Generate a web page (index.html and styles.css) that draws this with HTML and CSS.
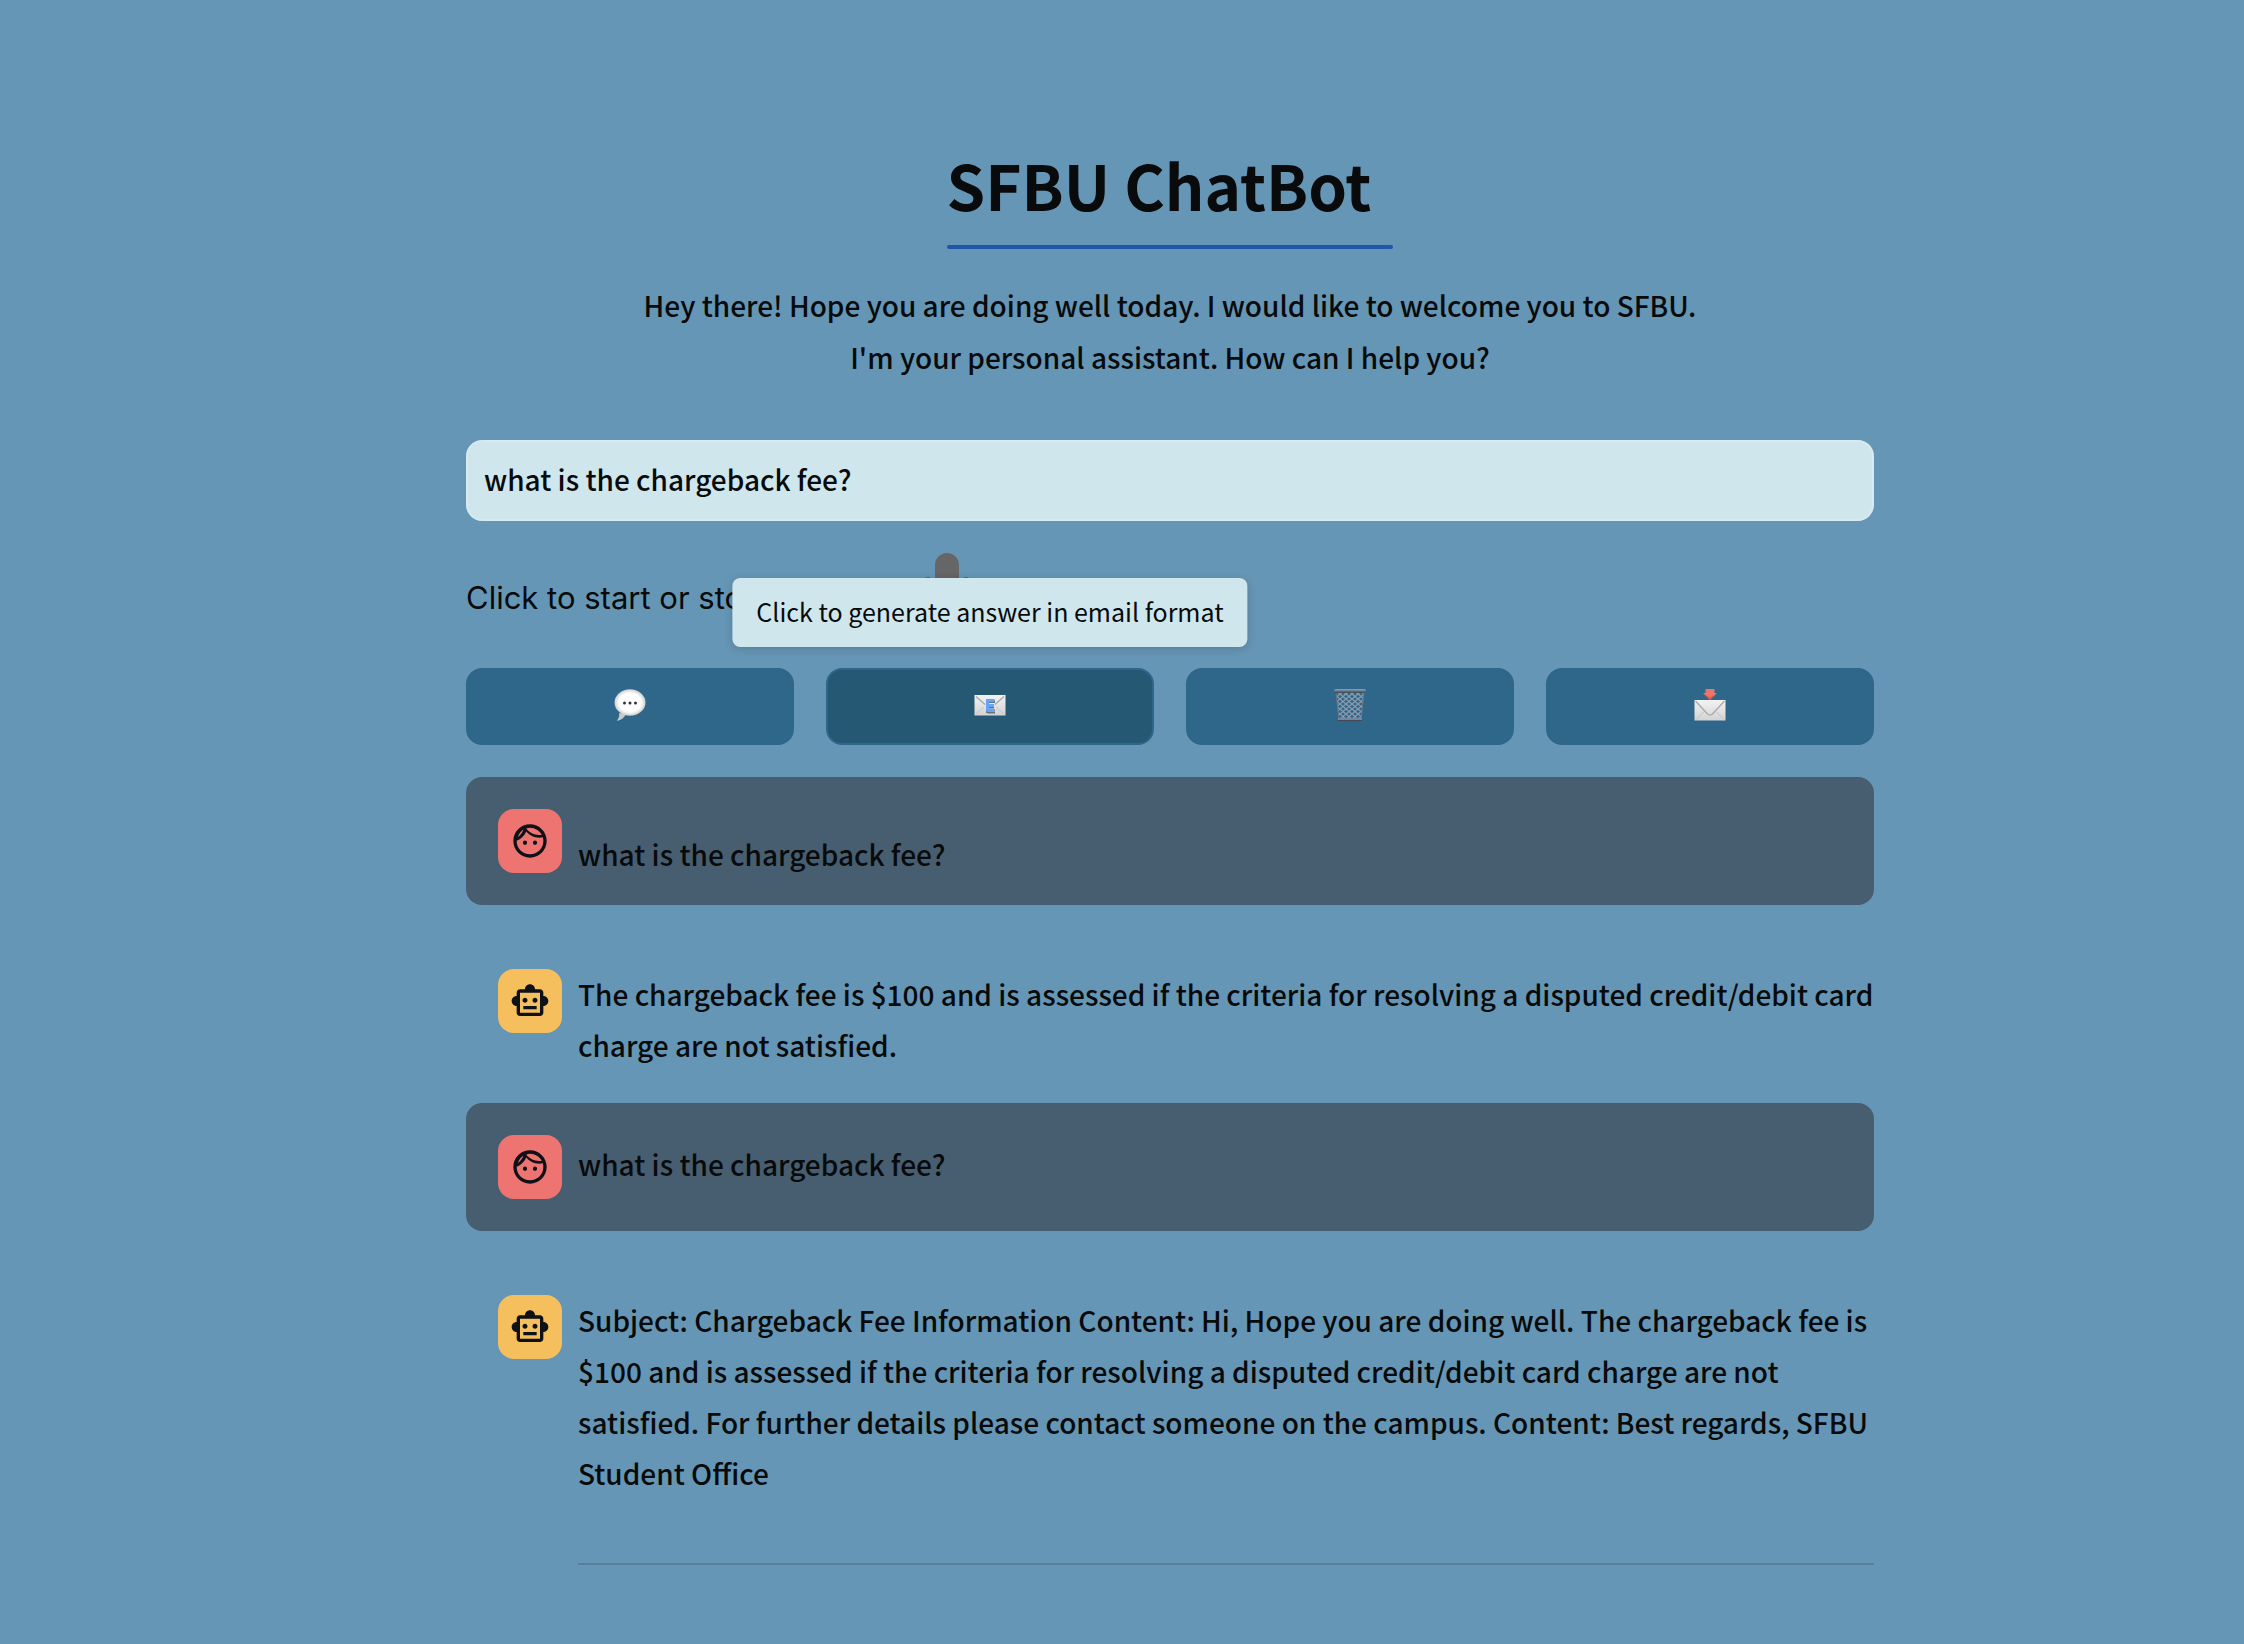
FILE: index.html
```html
<!DOCTYPE html>
<html lang="en">
<head>
<meta charset="utf-8">
<title>SFBU ChatBot</title>
<link rel="stylesheet" href="styles.css">
</head>
<body>
<svg class="defs" aria-hidden="true">
  <defs>
    <linearGradient id="paper" x1="0" y1="0" x2="0" y2="1"><stop offset="0" stop-color="#f3f3f3"/><stop offset="1" stop-color="#d3d3d3"/></linearGradient>
    <radialGradient id="bubble" cx=".5" cy=".5" r=".55"><stop offset=".65" stop-color="#fff"/><stop offset="1" stop-color="#bcbcbc"/></radialGradient>
    <linearGradient id="rim" x1="0" y1="0" x2="0" y2="1"><stop offset="0" stop-color="#84a9c8"/><stop offset="1" stop-color="#42434d"/></linearGradient>
    <pattern id="mesh" width="6" height="5" patternUnits="userSpaceOnUse"><path d="M0 0l6 5M6 0L0 5" stroke="#8c9bab" stroke-width="1.300"/></pattern>
    <symbol id="face" viewBox="0 0 24 24"><path d="M9 11.75c-.69 0-1.25.56-1.25 1.25s.56 1.25 1.25 1.25 1.25-.56 1.25-1.25-.56-1.25-1.25-1.25zm6 0c-.69 0-1.25.56-1.25 1.25s.56 1.25 1.25 1.25 1.25-.56 1.25-1.25-.56-1.25-1.25-1.25zM12 2C6.480 2 2 6.480 2 12s4.480 10 10 10 10-4.480 10-10S17.520 2 12 2zm0 2c3.050 0 5.740 1.720 7.080 4.240-.5.100-1.020.160-1.580.160-3.130 0-5.920-1.440-7.760-3.690C10.440 4.250 11.200 4 12 4zM8.080 5.030c-.650 1.820-1.820 3.380-3.350 4.510C5.290 7.690 6.480 6.080 8.080 5.030zM12 20c-4.410 0-8-3.590-8-8 0-.050.010-.100 0-.140 2.600-.980 4.690-2.990 5.740-5.550C11.580 8.560 14.370 10 17.500 10c.750 0 1.470-.090 2.170-.240.210.710.330 1.460.330 2.240 0 4.410-3.590 8-8 8z"/></symbol>
    <symbol id="robot" viewBox="0 0 24 24"><path d="M20 9V7c0-1.100-.900-2-2-2h-3c0-1.660-1.340-3-3-3S9 3.340 9 5H6c-1.100 0-2 .900-2 2v2c-1.660 0-3 1.340-3 3s1.340 3 3 3v4c0 1.100.900 2 2 2h12c1.100 0 2-.900 2-2v-4c1.660 0 3-1.340 3-3s-1.340-3-3-3zm-2 10H6V7h12v12zm-9-6c-.830 0-1.500-.670-1.500-1.500S8.170 10 9 10s1.500.670 1.500 1.500S9.830 13 9 13zm7.500-1.500c0 .830-.670 1.500-1.500 1.500s-1.500-.670-1.500-1.500.670-1.500 1.500-1.500 1.500.670 1.500 1.500zM8 15h8v2H8v-2z"/></symbol>
  </defs>
</svg>
<main class="page">
  <header class="intro">
    <h1 class="title">SFBU ChatBot</h1>
    <p class="welcome">Hey there! Hope you are doing well today. I would like to welcome you to SFBU.<br>I'm your personal assistant. How can I help you?</p>
  </header>

  <input class="question" type="text" aria-label="Your question" value="what is the chargeback fee?">

  <div class="recorder">
    <span class="recorder-label" id="record-label">Click to start or stop recording</span>
    <button class="mic" type="button" aria-labelledby="record-label">
      <svg viewBox="0 0 352 512" width="44" height="64"><path fill="#666" d="M176 352c53 0 96-43 96-96V96c0-53-43-96-96-96S80 43 80 96v160c0 53 43 96 96 96zm160-160h-16c-9 0-16 7-16 16v48c0 75-64 135-141 127-67-6-115-67-115-134v-41c0-9-7-16-16-16H16c-9 0-16 7-16 16v39c0 89 64 169 152 181v36H96c-9 0-16 7-16 16v16c0 9 7 16 16 16h160c9 0 16-7 16-16v-16c0-9-7-16-16-16h-56v-35c86-12 152-85 152-173v-48c0-9-7-16-16-16z"/></svg>
    </button>
  </div>

  <div class="actions">
    <button class="action" type="button" aria-label="Send question">
      <svg width="32" height="32" viewBox="0 0 32 32"><path fill="#c9c9c9" d="M5 24c1 3-1 6-2 8 4-1 7-3 9-7z"/><ellipse cx="16" cy="13.500" rx="15.500" ry="13.200" fill="url(#bubble)"/><g fill="#333"><circle cx="10.500" cy="14" r="1.500"/><circle cx="16" cy="14" r="1.500"/><circle cx="21.500" cy="14" r="1.500"/></g></svg>
    </button>
    <div class="action-wrap">
      <button class="action action-hover" type="button" aria-describedby="email-tip" aria-label="Email format">
        <svg width="32" height="32" viewBox="0 0 32 32"><rect x=".5" y="6" width="31" height="20.500" fill="url(#paper)"/><path d="M2 7.500l9 8M30 7.500l-9 8" stroke="#a9a9a9" stroke-width="1.400"/><path d="M2 25l8-7M30 25l-8-7" stroke="#c5c5c5"/><path d="M13.500 24V12.500h7.500M13.500 18h6.500M13.500 23h7.500" fill="none" stroke="#65717e" stroke-width="3"/><path d="M13.500 22.500V11.500h7M13.500 16.500h6.500M13.500 21.500h7.500" fill="none" stroke="#65a5f8" stroke-width="3"/></svg>
      </button>
      <div class="tooltip" role="tooltip" id="email-tip">Click to generate answer in email format</div>
    </div>
    <button class="action" type="button" aria-label="Clear conversation">
      <svg width="32" height="32" viewBox="0 0 32 32"><path d="M2 3h28l-3 28H5z" fill="url(#mesh)" stroke="#697787"/><rect x="4" y="29" width="24" height="3" fill="#7186a0"/><path d="M4 31.500h24" stroke="#454954"/><rect x="0" y="0" width="32" height="4" rx="2" fill="url(#rim)"/></svg>
    </button>
    <button class="action" type="button" aria-label="Send by email">
      <svg width="32" height="32" viewBox="0 0 32 32"><rect x=".5" y="11" width="31" height="20.500" fill="url(#paper)"/><path d="M1.500 12l12 13q2.500 2 5 0l12-13" fill="none" stroke="#a8a8ae" stroke-width="1.300"/><path d="M2 30.500l8-8M30 30.500l-8-8" stroke="#c2c2c2"/><path d="M11.500 0h9v4H23l-7 7-7-7h2.500z" fill="#ee7468"/><path d="M9 4l7 7 7-7-7 5z" fill="#ce5547"/></svg>
    </button>
  </div>

  <section class="chat" aria-label="Conversation">
    <article class="message user first">
      <span class="avatar avatar-user"><svg width="40" height="40"><use href="#face"/></svg></span>
      <p class="text">what is the chargeback fee?</p>
    </article>
    <article class="message">
      <span class="avatar avatar-bot"><svg width="40" height="40"><use href="#robot"/></svg></span>
      <p class="text">The chargeback fee is $100 and is assessed if the criteria for resolving a disputed credit/debit card charge are not satisfied.</p>
    </article>
    <article class="message user">
      <span class="avatar avatar-user"><svg width="40" height="40"><use href="#face"/></svg></span>
      <p class="text">what is the chargeback fee?</p>
    </article>
    <article class="message">
      <span class="avatar avatar-bot"><svg width="40" height="40"><use href="#robot"/></svg></span>
      <div class="body">
        <p class="text">Subject: Chargeback Fee Information Content: Hi, Hope you are doing well. The chargeback fee is $100 and is assessed if the criteria for resolving a disputed credit/debit card charge are not satisfied. For further details please contact someone on the campus. Content: Best regards, SFBU Student Office</p>
        <hr class="rule">
      </div>
    </article>
  </section>
</main>
</body>
</html>
```
FILE: styles.css
```css
* { box-sizing: border-box; }

body {
  margin: 0;
  padding: 128px 0 76px 96px;
  background: #6696b5;
  color: #080a0b;
  font-family: "Noto Sans CJK SC", "Noto Sans", sans-serif;
  font-size: 28px;
  font-weight: 500;
  line-height: 51px;
}

p, h1 { margin: 0; }
button, input { font: inherit; color: inherit; }
svg { display: block; }
.defs { position: absolute; width: 0; height: 0; }

.page {
  max-width: 1408px;
  margin: 0 auto;
}

.intro {
  display: flex;
  flex-direction: column;
  align-items: center;
  gap: 34px;
  text-align: center;
}

.title {
  padding: 0 22px 5px 0;
  font-size: 62px;
  line-height: 112px;
  font-weight: 700;
  position: relative;
}

.title::after {
  content: "";
  position: absolute;
  inset: auto 0 -4px 0;
  height: 4px;
  border-radius: 2px;
  background: #2056a7;
}

.welcome { line-height: 52px; }

.question {
  display: block;
  width: 100%;
  height: 81px;
  margin-top: 57px;
  padding: 0 16px 4px;
  border: 2px solid #d6ebf1;
  border-radius: 16px;
  background: #cfe6ed;
}

.recorder {
  display: flex;
  gap: 14px;
  height: 115px;
  margin-top: 32px;
}

.recorder-label {
  margin-top: 19px;
  font-family: Inter, "Liberation Sans", sans-serif;
  font-size: 31px;
  font-weight: 400;
}

.mic {
  align-self: flex-start;
  padding: 0;
  border: 0;
  background: none;
}

.actions {
  display: grid;
  grid-template-columns: repeat(4, 1fr);
  gap: 32px;
}

.action-wrap { position: relative; }

.action {
  display: flex;
  justify-content: center;
  align-items: center;
  width: 100%;
  height: 77px;
  padding: 0 0 4px;
  border: 2px solid #2e678a;
  border-radius: 16px;
  background: #2e678a;
}

.action-hover { background: #255873; }

.tooltip {
  position: absolute;
  left: 50%;
  bottom: calc(100% + 21px);
  transform: translateX(-50%);
  padding: 8px 24px 10px;
  border-radius: 8px;
  background: #cfe6ed;
  box-shadow: 0 2px 8px rgba(0, 0, 0, .16);
  font-size: 25px;
  font-weight: 400;
  white-space: nowrap;
}

.chat {
  display: flex;
  flex-direction: column;
  gap: 32px;
  margin-top: 32px;
}

.message {
  display: flex;
  align-items: flex-start;
  gap: 16px;
  padding: 32px 0 0 32px;
}

.user {
  min-height: 128px;
  padding: 32px 32px 16px;
  border-radius: 16px;
  background: #475e71;
}

.user .text { padding-top: 4px; }
.first .text { padding-top: 20px; }

.avatar {
  display: flex;
  flex: none;
  justify-content: center;
  align-items: center;
  width: 64px;
  height: 64px;
  border-radius: 16px;
  fill: #0e1117;
}

.avatar-user { background: #ed7470; }
.avatar-bot { background: #f5bf5d; }

.text, .body { flex: 1; min-width: 0; }

.rule {
  margin: 64px 0 0;
  border: 0;
  border-top: 2px solid #557f9a;
}
```
